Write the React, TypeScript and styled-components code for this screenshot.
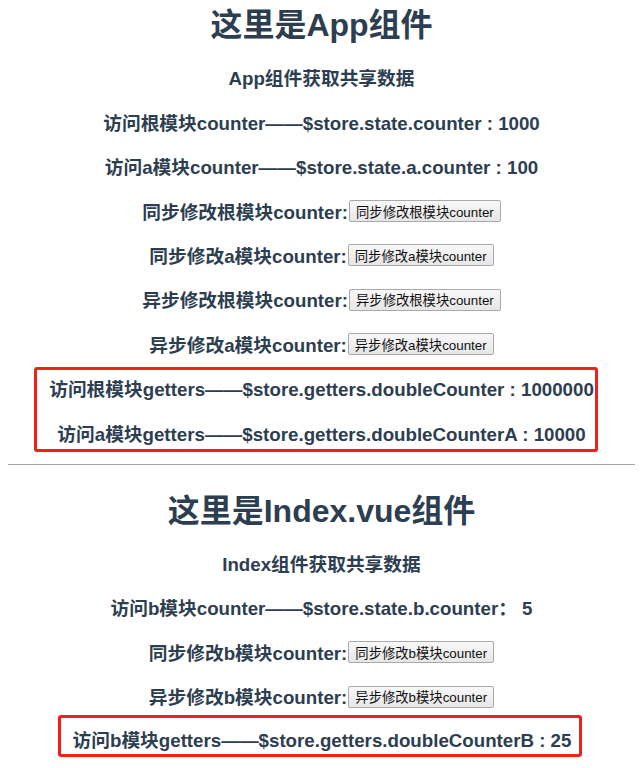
import styled, { createGlobalStyle } from "styled-components";

const GlobalStyle = createGlobalStyle`
  body {
    margin: 0 8px;
    background: #fff;
  }
`;

const Page = styled.div`
  display: flex;
  flex-direction: column;
  align-items: center;
  color: #2c3e50;
  font-family: "Liberation Sans", Arial, "Noto Sans CJK SC", sans-serif;
  text-align: center;
`;

const Section = styled.div<{ $top: number }>`
  display: flex;
  flex-direction: column;
  align-items: center;
  gap: 18.4px;
  width: 100%;
  padding-top: ${(p) => p.$top}px;
`;

const Title = styled.h1<{ $after: number }>`
  margin: 0 0 ${(p) => p.$after}px;
  font-size: 32px;
  line-height: 40px;
  font-weight: 700;
`;

const Row = styled.h3`
  margin: 0;
  font-size: 18.72px;
  line-height: 26px;
  font-weight: 700;
  white-space: nowrap;
`;

const Action = styled.button`
  font-family: "Liberation Sans", Arial, "Noto Sans CJK SC", sans-serif;
  font-size: 13.33px;
  color: #111;
  height: 22px;
  padding: 0 6px;
  margin-left: 1px;
  vertical-align: 2px;
  background: linear-gradient(#f8f8f8, #e6e6e6);
  border: 1px solid #a9a9a9;
  border-radius: 2px;
`;

const Highlight = styled.div<{
  $mt: number;
  $pt: number;
  $pb: number;
  $pl: number;
  $pr: number;
  $shift: number;
}>`
  display: flex;
  flex-direction: column;
  align-items: center;
  gap: 18.4px;
  margin-top: ${(p) => p.$mt}px;
  margin-right: ${(p) => p.$shift}px;
  padding: ${(p) => `${p.$pt}px ${p.$pr}px ${p.$pb}px ${p.$pl}px`};
  border: 3px solid #f31f1a;
  border-radius: 3px;
`;

const Divider = styled.hr`
  width: 100%;
  margin: 12px 0 0;
  border: none;
  border-top: 1px solid #a3a3a3;
`;

function ActionRow({ label, button }: { label: string; button: string }) {
  return (
    <Row>
      {label}
      <Action>{button}</Action>
    </Row>
  );
}

export default function App() {
  return (
    <>
      <GlobalStyle />
      <Page>
        <Section $top={5}>
          <Title $after={3}>这里是App组件</Title>
          <Row>App组件获取共享数据</Row>
          <Row>访问根模块counter——$store.state.counter : 1000</Row>
          <Row>访问a模块counter——$store.state.a.counter : 100</Row>
          <ActionRow label="同步修改根模块counter:" button="同步修改根模块counter" />
          <ActionRow label="同步修改a模块counter:" button="同步修改a模块counter" />
          <ActionRow label="异步修改根模块counter:" button="异步修改根模块counter" />
          <ActionRow label="异步修改a模块counter:" button="异步修改a模块counter" />
          <Highlight $mt={-10} $pt={7} $pb={1} $pl={12} $pr={1} $shift={11}>
            <Row>访问根模块getters——$store.getters.doubleCounter : 1000000</Row>
            <Row>访问a模块getters——$store.getters.doubleCounterA : 10000</Row>
          </Highlight>
        </Section>
        <Divider />
        <Section $top={26}>
          <Title $after={3}>这里是Index.vue组件</Title>
          <Row>Index组件获取共享数据</Row>
          <Row>访问b模块counter——$store.state.b.counter： 5</Row>
          <ActionRow label="同步修改b模块counter:" button="同步修改b模块counter" />
          <ActionRow label="异步修改b模块counter:" button="异步修改b模块counter" />
          <Highlight $mt={-14} $pt={10} $pb={0} $pl={12} $pr={8} $shift={3}>
            <Row>访问b模块getters——$store.getters.doubleCounterB : 25</Row>
          </Highlight>
        </Section>
      </Page>
    </>
  );
}
